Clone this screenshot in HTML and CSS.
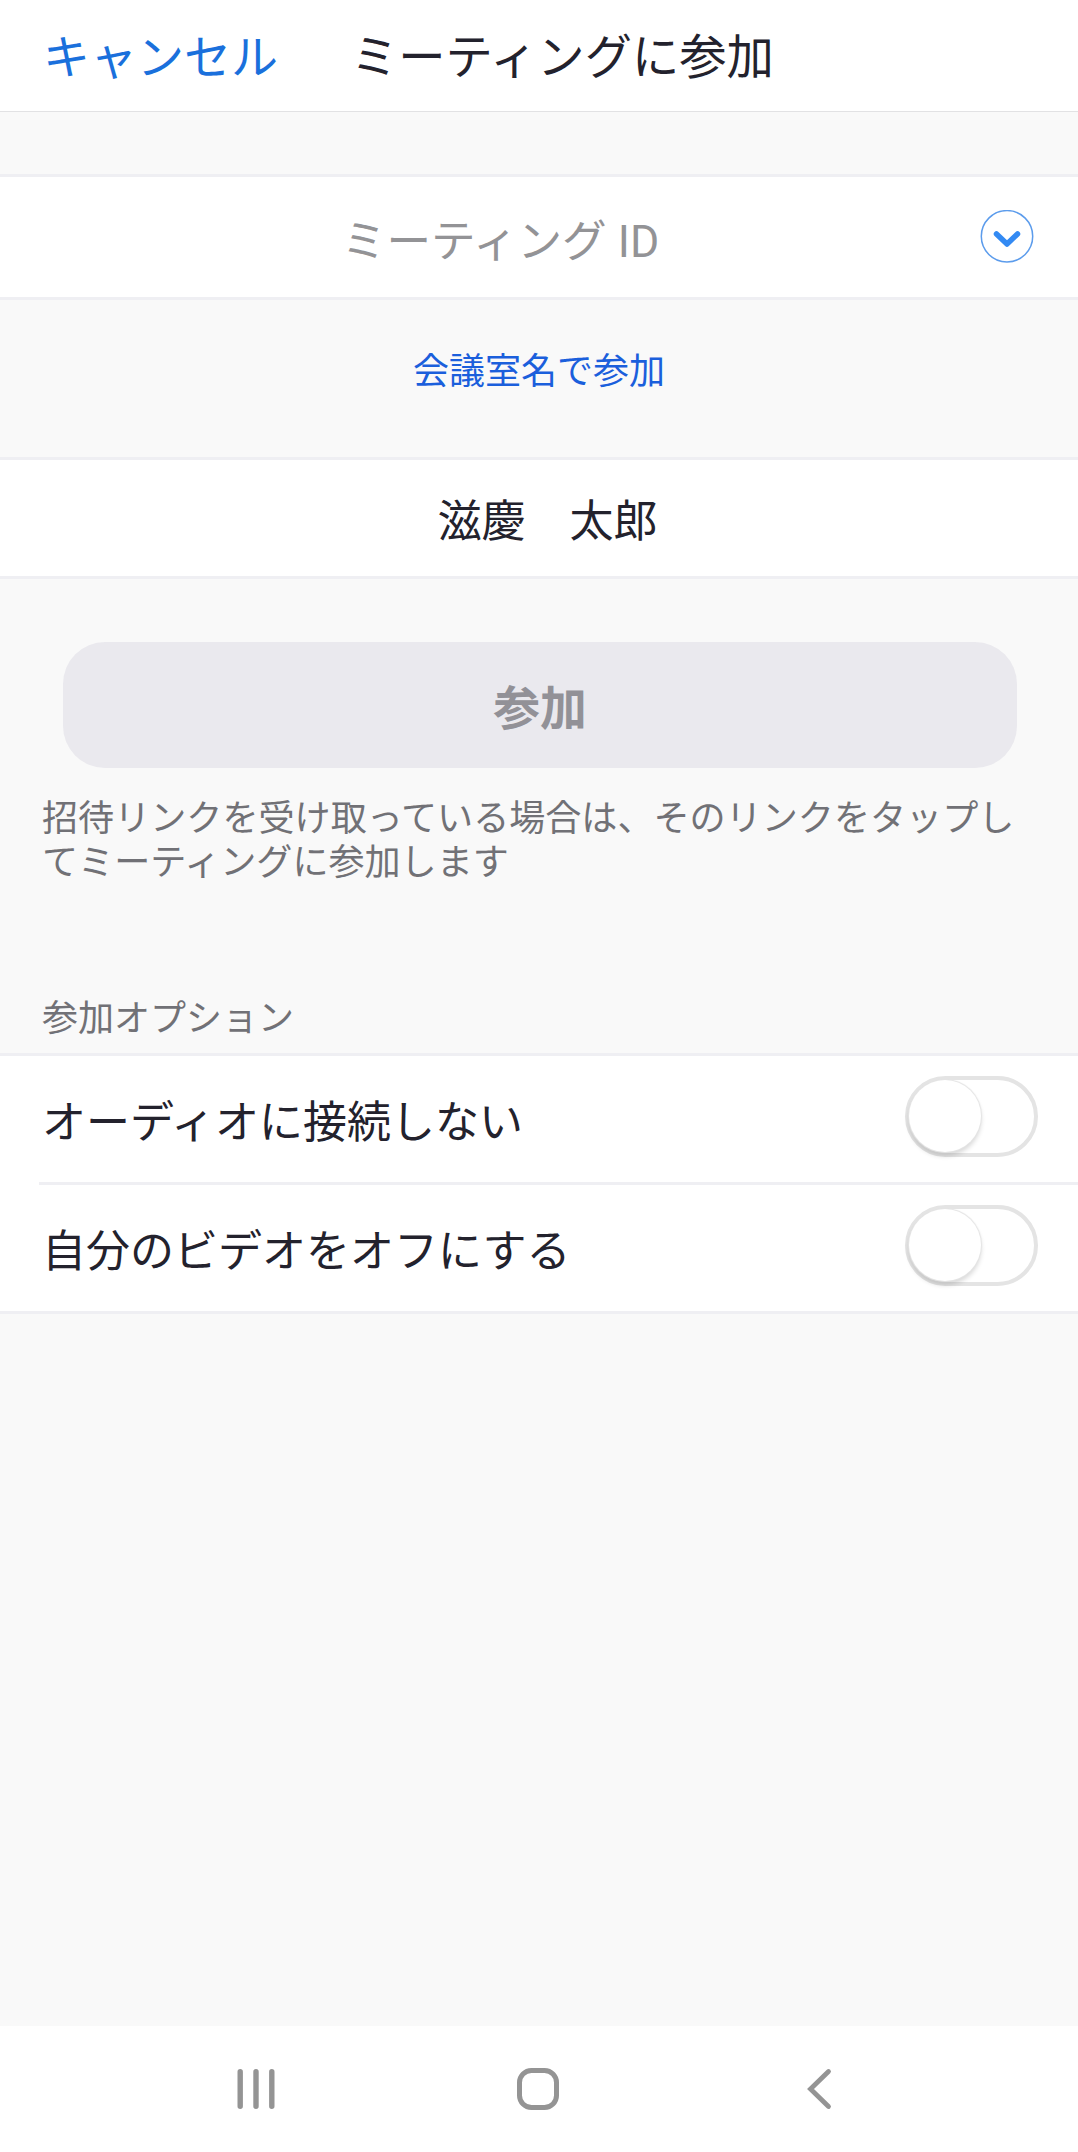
FILE: index.html
```html
<!DOCTYPE html>
<html lang="ja">
<head>
    <meta charset="UTF-8">
    <title>ミーティングに参加</title>
    <link rel="stylesheet" href="styles.css">
</head>
<body>
    <header class="header">
        <a class="cancel">キャンセル</a>
        <h1>ミーティングに参加</h1>
    </header>

    <main>
        <div class="field meeting-id">
            <span class="placeholder">ミーティング ID</span>
            <svg class="dropdown" width="54" height="54" viewBox="0 0 54 54" fill="none">
                <circle cx="27" cy="26.3" r="25.7" stroke="#5c9cec" stroke-width="1.5"/>
                <path d="M16.5 24L27 34L37.5 24" stroke="#338af3" stroke-width="5.5" stroke-linecap="round" stroke-linejoin="round"/>
            </svg>
        </div>
        <a class="room-link">会議室名で参加</a>
        <div class="field name">滋慶　太郎</div>

        <button class="join-btn">参加</button>
        <p class="note">招待リンクを受け取っている場合は、そのリンクをタップしてミーティングに参加します</p>

        <h2 class="section-title">参加オプション</h2>
        <div class="options">
            <div class="option">
                <span>オーディオに接続しない</span>
                <div class="toggle"><div class="knob"></div></div>
            </div>
            <div class="option">
                <span>自分のビデオをオフにする</span>
                <div class="toggle"><div class="knob"></div></div>
            </div>
        </div>
    </main>

    <!-- android navigation -->
    <nav class="navbar">
        <svg width="44" height="44" viewBox="0 0 44 44" stroke="#949494" stroke-width="5.4" stroke-linecap="round">
            <path d="M6.2 4.7V39.3M22 4.7V39.3M37.8 4.7V39.3"/>
        </svg>
        <svg width="44" height="44" viewBox="0 0 44 44" fill="none" stroke="#949494" stroke-width="5">
            <rect x="3.5" y="3.5" width="37" height="37" rx="12"/>
        </svg>
        <svg width="44" height="44" viewBox="0 0 44 44" fill="none" stroke="#949494" stroke-width="4.8" stroke-linecap="round">
            <path d="M31.5 4.5L13.5 22L31.5 39.5"/>
        </svg>
    </nav>
</body>
</html>
```

FILE: styles.css
```css
* {
    box-sizing: border-box;
}
body {
    margin: 0;
    min-height: 2152px;
    display: flex;
    flex-direction: column;
    background-color: #f9f9f9;
    color: #23222d;
    font-family: Roboto, "Noto Sans CJK JP", sans-serif;
    font-size: 44px;
}
main {
    flex: 1;
}
.header {
    display: flex;
    align-items: center;
    gap: 73px;
    height: 112px;
    padding: 0 0 5px 43px;
    background-color: #fff;
    border-bottom: 1px solid #e2e2e4;
    font-size: 47px;
}
.cancel {
    color: #1a70dc;
}
h1 {
    margin: 0;
    font-size: 47.3px;
    font-weight: normal;
}
.field {
    display: flex;
    align-items: center;
    justify-content: center;
    background-color: #fff;
    border-top: 3px solid #efeff3;
    border-bottom: 3px solid #efeff3;
}
.meeting-id {
    height: 126px;
    margin-top: 62px;
    padding: 0 44px 0 120px;
}
.placeholder {
    flex: 1;
    text-align: center;
    padding-right: 99px;
    font-size: 44.6px;
    color: #939396;
}
.dropdown {
    flex: none;
}
.room-link {
    display: block;
    height: 157px;
    padding-top: 46px;
    line-height: 52px;
    text-align: center;
    font-size: 36px;
    color: #1b5fdc;
}
.name {
    height: 122px;
    padding-left: 17px;
}
.join-btn {
    display: block;
    width: 954px;
    height: 126px;
    margin: 63px 0 0 63px;
    padding-bottom: 3px;
    border: none;
    border-radius: 42px;
    background-color: #eae9ee;
    color: #929197;
    font-family: inherit;
    font-size: 46.8px;
    font-weight: bold;
}
.note {
    margin: 29px 58px 0 42px;
    font-size: 36.1px;
    line-height: 44px;
    color: #717176;
}
.section-title {
    margin: 112px 0 12px 42px;
    font-size: 36px;
    line-height: 44px;
    font-weight: normal;
    color: #717176;
}
.options {
    background-color: #fff;
    border-top: 3px solid #efeff3;
    border-bottom: 3px solid #efeff3;
}
.option {
    display: flex;
    align-items: center;
    justify-content: space-between;
    height: 126px;
    margin-left: 39px;
    padding: 0 40px 0 3px;
}
.option + .option {
    height: 129px;
    border-top: 3px solid #efeff3;
}
.toggle {
    width: 133px;
    height: 81px;
    margin-bottom: 5px;
    border: 4px solid #e4e4e4;
    border-radius: 41px;
}
.knob {
    width: 72px;
    height: 72px;
    border-radius: 50%;
    background-color: #fff;
    box-shadow: 0 0 1px 1px #e4e4e4, 0 4px 5px rgba(0, 0, 0, 0.16);
}
.navbar {
    display: flex;
    justify-content: space-between;
    height: 126px;
    padding: 41px 237px 0 234px;
    background-color: #fff;
}
```
